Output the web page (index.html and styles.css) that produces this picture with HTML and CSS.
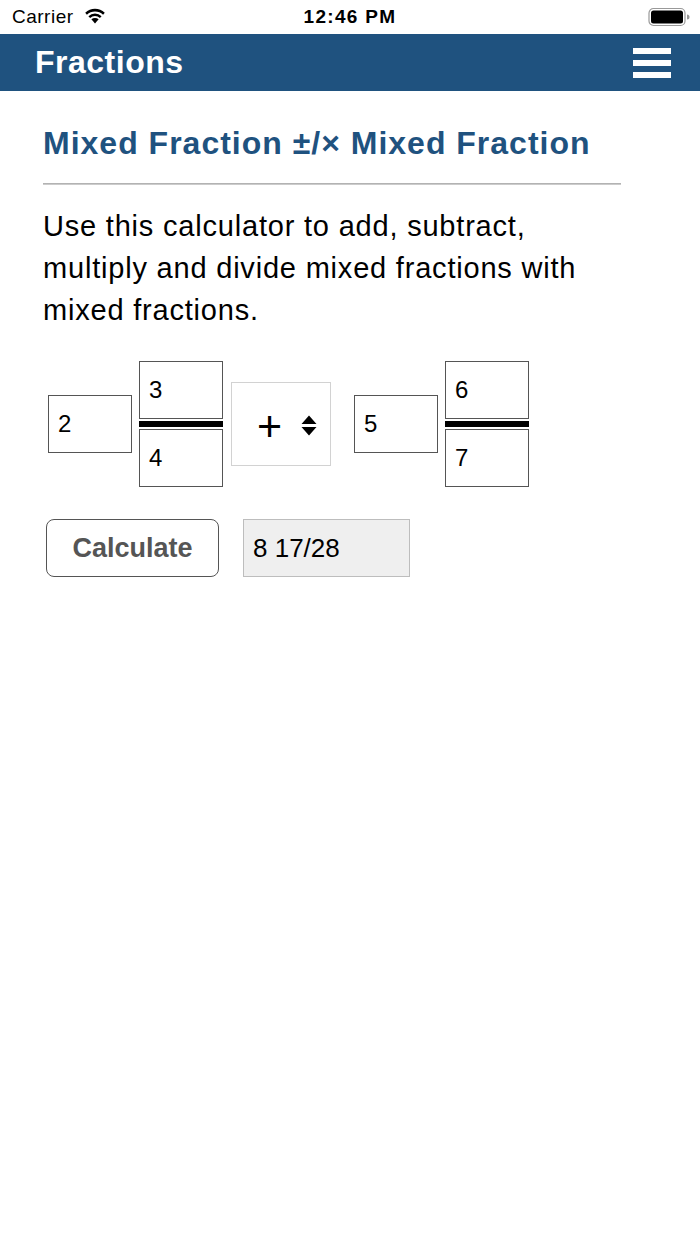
FILE: index.html
```html
<!DOCTYPE html>
<html>
<head>
<meta charset="utf-8">
<link rel="stylesheet" href="styles.css">
</head>
<body>
<div class="status">
  <div class="carrier">Carrier
    <svg class="wifi" width="24" height="17" viewBox="0 0 22 16"><path d="M11 15.5 L7.6 11.6 A5 5 0 0 1 14.4 11.6 Z" fill="#000"/><path d="M4.8 8.6 A9 9 0 0 1 17.2 8.6 L15.6 10.4 A6.6 6.6 0 0 0 6.4 10.4 Z" fill="#000"/><path d="M1.8 5.4 A13.4 13.4 0 0 1 20.2 5.4 L18.6 7.2 A11 11 0 0 0 3.4 7.2 Z" fill="#000"/></svg>
  </div>
  <div class="time">12:46 PM</div>
  <div class="battery">
    <svg width="42" height="20" viewBox="0 0 42 20"><rect x="1" y="1.5" width="36" height="17" rx="4.5" fill="none" stroke="#999" stroke-width="1.2"/><rect x="3" y="3.5" width="32" height="13" rx="2.5" fill="#000"/><path d="M39 7.5 a2.5 2.5 0 0 1 0 5 z" fill="#999"/></svg>
  </div>
</div>
<header class="topbar">
  <div class="brand">Fractions</div>
  <div class="menu"><span></span><span></span><span></span></div>
</header>
<main class="content">
  <h1 class="title">Mixed Fraction ±/× Mixed Fraction</h1>
  <hr class="rule">
  <p class="intro">Use this calculator to add, subtract, multiply and divide mixed fractions with mixed fractions.</p>
  <div class="calc">
    <div class="box whole">2</div>
    <div class="frac">
      <div class="box">3</div>
      <div class="bar"></div>
      <div class="box">4</div>
    </div>
    <div class="op"><span class="plus">+</span>
      <svg class="updown" width="16" height="21" viewBox="0 0 16 21"><path d="M8 0.5 L15.5 9 H0.5 Z M8 20.5 L15.5 12 H0.5 Z" fill="#000"/></svg>
    </div>
    <div class="box whole second">5</div>
    <div class="frac">
      <div class="box">6</div>
      <div class="bar"></div>
      <div class="box">7</div>
    </div>
  </div>
  <div class="actions">
    <div class="btn">Calculate</div>
    <div class="result">8 17/28</div>
  </div>
</main>
</body>
</html>
```
FILE: styles.css
```css
html, body {
  margin: 0;
  padding: 0;
  background: #fff;
  font-family: "Liberation Sans", Arial, sans-serif;
  color: #000;
}
.status {
  height: 34px;
  display: flex;
  align-items: center;
  justify-content: space-between;
  padding: 0 10px 0 12px;
  position: relative;
}
.carrier {
  font-size: 19px;
  letter-spacing: 0.5px;
  display: flex;
  align-items: center;
  gap: 9px;
}
.wifi { margin-top: -3px; }
.time {
  position: absolute;
  left: 0;
  right: 0;
  text-align: center;
  font-size: 19px;
  letter-spacing: 1.3px;
  font-weight: bold;
  pointer-events: none;
}
.battery { display: flex; align-items: center; }
.topbar {
  height: 57px;
  background: #1f527f;
  display: flex;
  align-items: center;
  justify-content: space-between;
  padding: 0 29px 0 35px;
}
.brand {
  color: #fff;
  font-weight: bold;
  font-size: 32px;
  letter-spacing: 0.5px;
}
.menu {
  width: 38px;
  display: flex;
  flex-direction: column;
  gap: 6.5px;
  margin-top: 1px;
}
.menu span {
  display: block;
  height: 5.5px;
  background: #fff;
}
.content {
  padding: 0 79px 0 43px;
}
.title {
  margin: 34px 0 0;
  font-size: 32px;
  letter-spacing: 1px;
  line-height: 36px;
  color: #1f527f;
  font-weight: bold;
}
.rule {
  margin: 22px 0 0;
  border: 0;
  height: 2px;
  background: linear-gradient(#a6a6a6, #d8d8d8);
}
.intro {
  margin: 20px 0 0;
  font-size: 29px;
  letter-spacing: 0.8px;
  line-height: 42px;
}
.calc {
  display: flex;
  align-items: center;
  margin: 30px 0 0 5px;
}
.box {
  box-sizing: border-box;
  width: 84px;
  height: 58px;
  border: 1.5px solid #555;
  font-size: 24px;
  display: flex;
  align-items: center;
  padding-left: 9px;
  background: #fff;
}
.frac {
  display: flex;
  flex-direction: column;
  gap: 2px;
  margin-left: 7px;
}
.bar {
  height: 6px;
  background: #000;
}
.op {
  box-sizing: border-box;
  width: 100px;
  height: 84px;
  margin-left: 8px;
  border: 1.5px solid #d2d2d2;
  display: flex;
  align-items: center;
  padding-left: 25px;
  gap: 19px;
}
.plus {
  font-size: 43px;
  line-height: 1;
  margin-top: 4px;
}
.updown { margin-top: 2px; }
.second { margin-left: 23px; }
.actions {
  display: flex;
  align-items: center;
  margin: 32px 0 0 3px;
  gap: 24px;
}
.btn {
  box-sizing: border-box;
  width: 173px;
  height: 58px;
  border: 1.5px solid #555;
  border-radius: 8px;
  display: flex;
  align-items: center;
  justify-content: center;
  font-size: 27px;
  font-weight: bold;
  color: #555;
}
.result {
  box-sizing: border-box;
  width: 167px;
  height: 58px;
  background: #efefef;
  border: 1.5px solid #bdbdbd;
  display: flex;
  align-items: center;
  padding-left: 9px;
  font-size: 26px;
}
```
